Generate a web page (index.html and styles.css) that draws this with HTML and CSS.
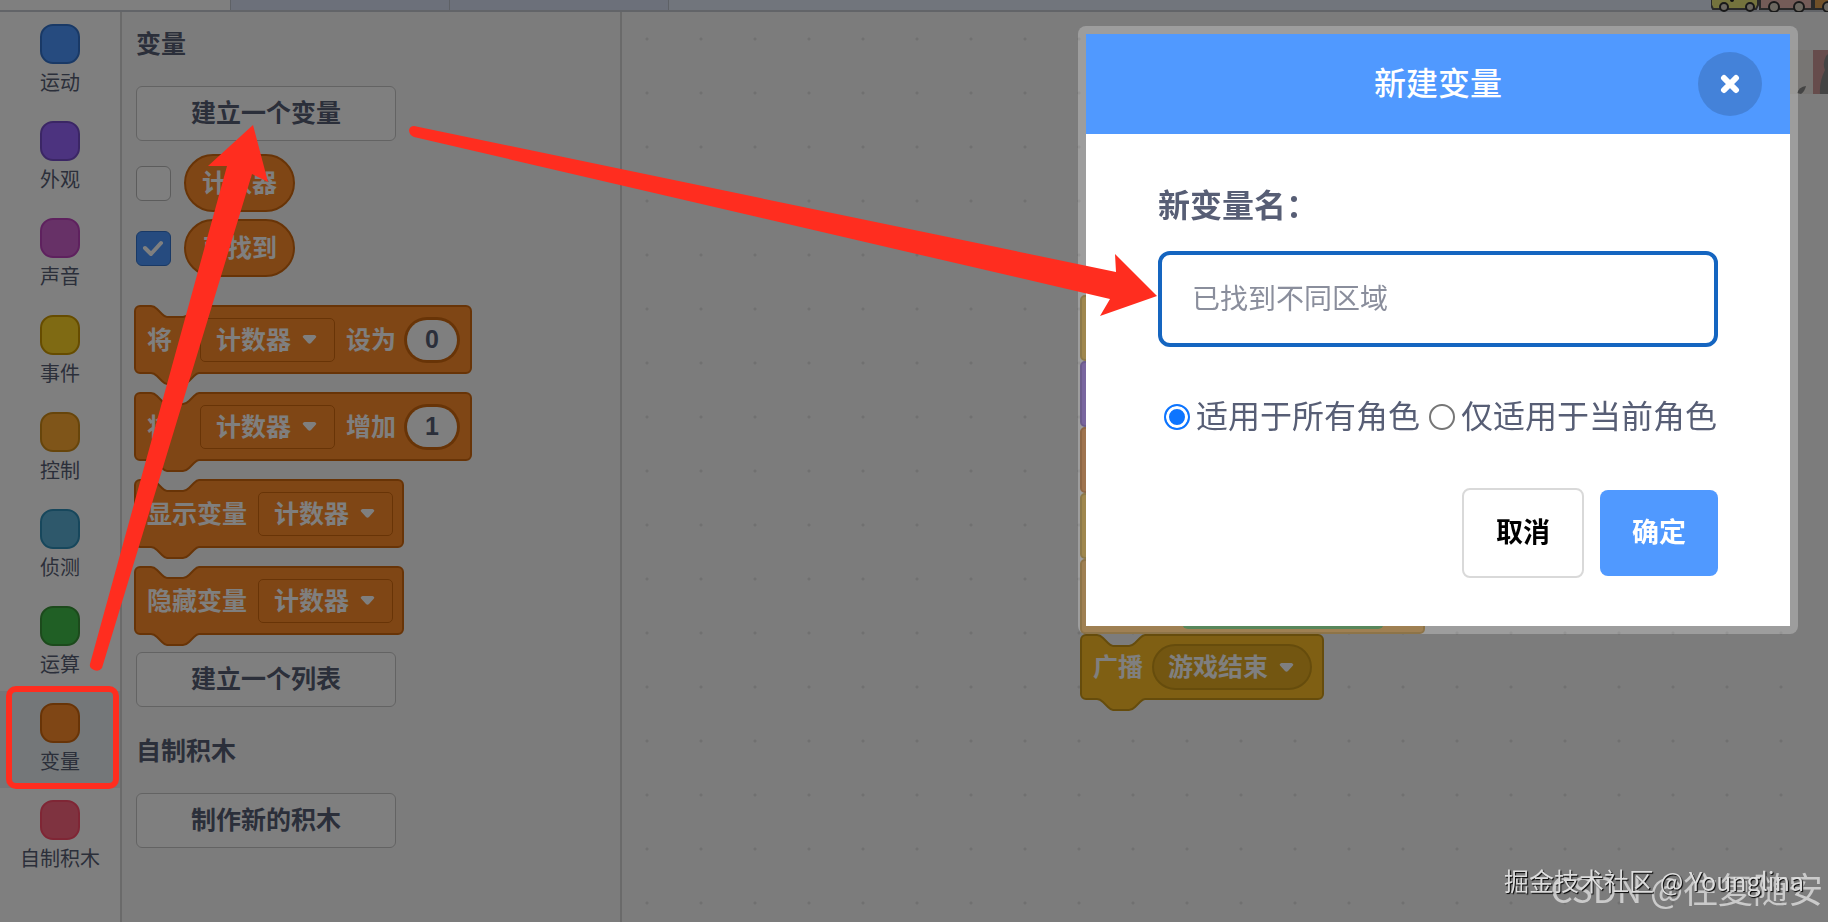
FILE: index.html
```html
<!DOCTYPE html>
<html lang="zh-CN">
<head>
    <meta charset="UTF-8">
    <meta name="viewport" content="width=device-width, initial-scale=1.0">
    <title>新建变量</title>
    <link rel="stylesheet" href="styles.css">
</head>
<body>
    <!-- shapes shared by the blocks -->
    <svg class="defs" aria-hidden="true">
        <symbol id="caret" viewBox="0 0 14 9"><path d="M2 0H12Q15 1 13 3L8.500 8Q7 9.500 5.500 8L1 3Q-1 1 2 0Z" fill="#fff"/></symbol>
        <path id="block-wide" d="M1 6a5 5 0 0 1 5-5H17c3 0 4 1 6 3l5 5c1 1 3 3 5 3h16c3 0 4-1 6-3l5-5c1-1 3-3 5-3H332a5 5 0 0 1 5 5V63a5 5 0 0 1-5 5H65c-2 0-4 2-5 3l-5 5c-2 2-3 3-6 3H33c-2 0-4-2-5-3l-5-5c-2-2-3-3-6-3H6a5 5 0 0 1-5-5z"/>
        <path id="block-mid" d="M1 6a5 5 0 0 1 5-5H17c3 0 4 1 6 3l5 5c1 1 3 3 5 3h16c3 0 4-1 6-3l5-5c1-1 3-3 5-3H264a5 5 0 0 1 5 5V63a5 5 0 0 1-5 5H65c-2 0-4 2-5 3l-5 5c-2 2-3 3-6 3H33c-2 0-4-2-5-3l-5-5c-2-2-3-3-6-3H6a5 5 0 0 1-5-5z"/>
        <path id="block-short" d="M1 6a5 5 0 0 1 5-5H17c3 0 4 1 6 3l5 5c1 1 3 3 5 3h16c3 0 4-1 6-3l5-5c1-1 3-3 5-3H238a5 5 0 0 1 5 5V60a5 5 0 0 1-5 5H65c-2 0-4 2-5 3l-5 5c-2 2-3 3-6 3H33c-2 0-4-2-5-3l-5-5c-2-2-3-3-6-3H6a5 5 0 0 1-5-5z"/>
    </svg>

    <div class="tabs">
        <div class="tab tab-active"></div>
        <div class="tab"></div>
        <div class="tab"></div>
        <svg class="cars" width="117" height="13" viewBox="0 0 117 13">
            <g stroke="#555" stroke-width="2">
                <path d="M0-4V5l2 4H45l2-4V-4" fill="#e8e77a"/>
                <path d="M49-4V9h52V-4" fill="#e8b8b0"/>
                <path d="M103-4V9h16V-4" fill="#e0a050"/>
            </g>
            <circle cx="21" cy="0" r="2" fill="#222"/>
            <g fill="#d8d0c0" stroke="#333" stroke-width="2">
                <circle cx="13" cy="7" r="4"/><circle cx="39" cy="7" r="4"/>
                <circle cx="63" cy="7" r="5"/><circle cx="88" cy="7" r="5"/>
                <circle cx="117" cy="7" r="5"/>
            </g>
        </svg>
    </div>

    <div class="editor">
        <nav class="toolbox">
            <button class="category motion"><span class="bubble"></span>运动</button>
            <button class="category looks"><span class="bubble"></span>外观</button>
            <button class="category sound"><span class="bubble"></span>声音</button>
            <button class="category events"><span class="bubble"></span>事件</button>
            <button class="category control"><span class="bubble"></span>控制</button>
            <button class="category sensing"><span class="bubble"></span>侦测</button>
            <button class="category operators"><span class="bubble"></span>运算</button>
            <button class="category data selected"><span class="bubble"></span>变量</button>
            <button class="category custom"><span class="bubble"></span>自制积木</button>
        </nav>

        <section class="flyout">
            <h2>变量</h2>
            <button class="flyout-button">建立一个变量</button>
            <div class="reporters">
                <label class="reporter-row">
                    <input type="checkbox">
                    <span class="reporter">计数器</span>
                </label>
                <label class="reporter-row">
                    <input type="checkbox" checked>
                    <svg class="tick" width="22" height="18" viewBox="0 0 22 18"><path d="M3 9l6 6L19 4" fill="none" stroke="#fff" stroke-width="4" stroke-linecap="round" stroke-linejoin="round"/></svg>
                    <span class="reporter">已找到</span>
                </label>
            </div>
            <div class="block-list">
                <div class="block wide">
                    <svg class="shape" width="338" height="80"><use href="#block-wide"/></svg>
                    <span class="first-word">将</span>
                    <span class="field"><select aria-label="变量"><option>计数器</option></select><svg class="caret"><use href="#caret"/></svg></span>
                    <span>设为</span>
                    <input class="number" type="text" value="0" aria-label="设为">
                </div>
                <div class="block wide">
                    <svg class="shape" width="338" height="80"><use href="#block-wide"/></svg>
                    <span class="first-word">将</span>
                    <span class="field"><select aria-label="变量"><option>计数器</option></select><svg class="caret"><use href="#caret"/></svg></span>
                    <span>增加</span>
                    <input class="number" type="text" value="1" aria-label="增加">
                </div>
                <div class="block mid">
                    <svg class="shape" width="270" height="80"><use href="#block-mid"/></svg>
                    <span>显示变量</span>
                    <span class="field"><select aria-label="显示变量"><option>计数器</option></select><svg class="caret"><use href="#caret"/></svg></span>
                </div>
                <div class="block mid">
                    <svg class="shape" width="270" height="80"><use href="#block-mid"/></svg>
                    <span>隐藏变量</span>
                    <span class="field"><select aria-label="隐藏变量"><option>计数器</option></select><svg class="caret"><use href="#caret"/></svg></span>
                </div>
            </div>
            <button class="flyout-button">建立一个列表</button>
            <h2 class="second">自制积木</h2>
            <button class="flyout-button">制作新的积木</button>
        </section>

        <main class="workspace">
            <div class="script">
                <div class="strip events"></div>
                <div class="strip looks"></div>
                <div class="strip data"></div>
                <div class="strip events"></div>
                <div class="strip control"><span class="slot"></span></div>
                <div class="block broadcast">
                    <svg class="shape" width="244" height="77"><use href="#block-short"/></svg>
                    <span>广播</span>
                    <span class="field round"><select aria-label="广播"><option>游戏结束</option></select><svg class="caret"><use href="#caret"/></svg></span>
                </div>
            </div>
            <svg class="sprite" width="42" height="44" viewBox="0 0 42 44">
                <path d="M0 0H42V44H0Z" fill="#efebe6"/>
                <path d="M25 0H42V44H25Z" fill="#c99"/>
                <path d="M38 6q-4 8-1 14-6 12-5 24h10V2z" fill="#888"/>
                <path d="M9 43q2-6 9-7-1 5-5 8z" fill="#888"/>
            </svg>
        </main>
    </div>

    <div class="overlay">
        <form class="modal" role="dialog" aria-labelledby="modalTitle">
            <div class="modal-header">
                <h1 id="modalTitle">新建变量</h1>
                <button type="button" class="close" aria-label="关闭">
                    <svg width="20" height="20" viewBox="0 0 20 20"><path d="M4 4L16 16M16 4L4 16" stroke="#fff" stroke-width="6" stroke-linecap="round"/></svg>
                </button>
            </div>
            <div class="modal-body">
                <label class="name-label" for="variableName">新变量名：</label>
                <input class="name-input" type="text" id="variableName" placeholder="已找到不同区域">
                <div class="options">
                    <label><input type="radio" name="scope" checked>适用于所有角色</label>
                    <label><input type="radio" name="scope">仅适用于当前角色</label>
                </div>
                <div class="buttons">
                    <button type="button" class="cancel">取消</button>
                    <button type="submit" class="ok">确定</button>
                </div>
            </div>
        </form>
    </div>

    <!-- hand-drawn marks over the editor -->
    <svg class="marks" width="1170" height="800" viewBox="0 0 1170 800" aria-hidden="true">
        <rect x="9" y="689" width="107" height="97" rx="7" fill="none" stroke="#ff2d1f" stroke-width="6"/>
        <g fill="#ff2d1f">
            <path d="M90 664L227 166L208 166L253 125L268 182L252 174L102 668Q99 672 94 670Q89 668 90 664Z"/>
            <path d="M414 126L1116 272L1115 254L1157 296L1100 316L1110 299L414 137Q409 135 409 130Q410 126 414 126Z"/>
        </g>
    </svg>
    <div class="watermark csdn">CSDN @往复随安</div>
    <div class="watermark juejin">掘金技术社区 @ Younglina</div>
</body>
</html>
```
FILE: styles.css
```css
* {
    box-sizing: border-box;
}
body {
    margin: 0;
    min-height: 100vh;
    display: flex;
    flex-direction: column;
    overflow: hidden;
    font-family: "Liberation Sans", "Noto Sans CJK SC", sans-serif;
    color: #575e75;
    background: #fff;
}
button, input, select {
    font-family: inherit;
    color: inherit;
    margin: 0;
}
h1, h2 {
    margin: 0;
}
.defs {
    position: absolute;
    width: 0;
    height: 0;
}

/* colours of the block families */
.motion { --fill: #4c97ff; --edge: #3373cc; }
.looks { --fill: #9966ff; --edge: #774dcb; }
.sound { --fill: #cf63cf; --edge: #bd42bd; }
.events, .broadcast { --fill: #ffbf26; --edge: #cc9919; }
.control { --fill: #ffab33; --edge: #cf8b17; }
.sensing { --fill: #5cb1d6; --edge: #2e8eb8; }
.operators { --fill: #40bf4a; --edge: #389438; }
.data, .flyout { --fill: #ff8c2a; --edge: #d1690e; }
.custom { --fill: #ff6680; --edge: #ff4d6a; }

/* top tabs */
.tabs {
    position: relative;
    display: flex;
    height: 12px;
    background: #e3eaf8;
    border-bottom: 2px solid #c4c8d0;
}
.tab {
    width: 219px;
    background: #d9e1f5;
    border-right: 1px solid #bcc2cc;
}
.tab-active {
    width: 231px;
    background: #fff;
}
.cars {
    position: absolute;
    right: 0;
    top: 0;
}

.editor {
    flex: 1;
    display: flex;
}

/* category list */
.toolbox {
    width: 122px;
    border-right: 2px solid #d5d5d5;
    background: #fff;
}
.category {
    display: flex;
    flex-direction: column;
    align-items: center;
    width: 100%;
    height: 97px;
    padding: 12px 0 0;
    border: none;
    background: none;
    font-size: 20px;
    line-height: 38px;
    white-space: nowrap;
}
.category.selected {
    background: #e9eef2;
}
.category.events .bubble {
    background: #ffd526;
    border-color: #cc9900;
}
.bubble {
    width: 40px;
    height: 40px;
    border: 2px solid var(--edge);
    border-radius: 13px;
    background: var(--fill);
}

/* block palette */
.flyout {
    width: 500px;
    padding-left: 14px;
    border-right: 2px solid #d5d5d5;
    background: #f9f9f9;
}
.flyout h2 {
    font-size: 25px;
    line-height: 64px;
    margin-bottom: 10px;
}
.flyout h2.second {
    margin-top: 12px;
}
.flyout-button {
    display: block;
    width: 260px;
    height: 55px;
    padding: 0;
    border: 1px solid #c6c6c6;
    border-radius: 6px;
    background: #fff;
    font-size: 25px;
    font-weight: bold;
    line-height: 53px;
}
.reporters {
    display: flex;
    flex-direction: column;
    gap: 7px;
    margin: 13px 0 28px;
}
.reporter-row {
    position: relative;
    display: flex;
    align-items: center;
    gap: 13px;
}
.reporter-row input {
    appearance: none;
    width: 35px;
    height: 35px;
    border: 1px solid #b9b9b9;
    border-radius: 6px;
    background: #fff;
}
.reporter-row input:checked {
    background: #4c97ff;
    border-color: #3373cc;
}
.tick {
    position: absolute;
    left: 6px;
}
.reporter {
    height: 58px;
    padding: 0 16px;
    border: 2px solid var(--edge);
    border-radius: 29px;
    background: var(--fill);
    color: #fff;
    font-size: 25px;
    font-weight: bold;
    line-height: 54px;
}
.block-list {
    display: flex;
    flex-direction: column;
    gap: 18px;
    margin: 0 0 17px -2px;
}
.block {
    position: relative;
    display: flex;
    align-items: center;
    gap: 11px;
    height: 69px;
    padding-left: 13px;
    color: #fff;
    font-size: 25px;
    font-weight: bold;
    line-height: 40px;
    white-space: nowrap;
}
.block.wide {
    width: 338px;
}
.block.mid {
    width: 270px;
}
.block > span, .block > input {
    position: relative;
}
.shape {
    position: absolute;
    left: 0;
    top: 0;
    fill: var(--fill);
    stroke: var(--edge);
    stroke-width: 2px;
}
.first-word {
    width: 42px;
}
.field {
    display: flex;
    align-items: center;
}
.field select {
    appearance: none;
    height: 44px;
    padding: 0 42px 0 15px;
    border: 1px solid var(--edge);
    border-radius: 5px;
    background: transparent;
    font-size: 25px;
    font-weight: bold;
}
.caret {
    position: absolute;
    right: 18px;
    width: 15px;
    height: 9px;
    pointer-events: none;
}
.number {
    width: 50px;
    height: 40px;
    padding: 0;
    border: none;
    border-radius: 20px;
    background: #fff;
    box-shadow: 0 0 0 3px var(--edge);
    color: #575e75;
    font-size: 25px;
    font-weight: bold;
    text-align: center;
}

/* canvas */
.workspace {
    position: relative;
    flex: 1;
    overflow: hidden;
    background: #f9f9f9 radial-gradient(circle, #e0e0e0 1px, transparent 2px) -2px 0 / 54px 54px;
}
.script {
    position: absolute;
    left: 458px;
    top: 283px;
}
.strip {
    width: 300px;
    height: 66px;
    border: 2px solid var(--edge);
    border-radius: 5px;
    background: var(--fill);
}
.strip.control {
    display: flex;
    align-items: flex-end;
    width: 345px;
    height: 75px;
    padding: 0 0 3px 100px;
}
.slot {
    width: 202px;
    height: 46px;
    border-radius: 6px;
    background: #40bf4a;
}
.broadcast {
    gap: 9px;
    width: 244px;
    height: 66px;
}
.broadcast .field select {
    height: 46px;
    padding: 0 41px 0 14px;
    border: 2px solid var(--edge);
    border-radius: 23px;
    background: #e6ac22;
}
.sprite {
    position: absolute;
    right: -2px;
    top: 38px;
}

/* dialog */
.overlay {
    position: fixed;
    inset: 0;
    display: flex;
    justify-content: flex-end;
    align-items: flex-start;
    padding: 26px 30px;
    background: rgba(0, 0, 0, 0.5);
}
.modal {
    width: 100%;
    max-width: 720px;
    border: 8px solid rgba(255, 255, 255, 0.25);
    border-radius: 8px;
    background: #fff;
    background-clip: padding-box;
}
.modal-header {
    display: grid;
    grid-template-columns: 1fr auto 1fr;
    align-items: center;
    height: 100px;
    background: #5099ff;
    color: #fff;
}
.modal-header h1 {
    grid-column: 2;
    font-size: 32px;
    font-weight: 500;
    line-height: 48px;
}
.close {
    display: grid;
    place-items: center;
    justify-self: end;
    width: 64px;
    height: 64px;
    margin-right: 28px;
    padding: 0;
    border: none;
    border-radius: 50%;
    background: rgba(0, 0, 0, 0.15);
}
.modal-body {
    display: flex;
    flex-direction: column;
    padding: 48px 72px;
    font-size: 32px;
    line-height: 48px;
}
.name-label {
    font-weight: bold;
}
.name-input {
    height: 96px;
    margin: 21px 0 45px;
    padding: 2px 30px 0;
    border: 4px solid #1565c0;
    border-radius: 12px;
    background: #fff;
    font-size: 28px;
}
.name-input::placeholder {
    color: #8a8e9c;
}
.options {
    display: flex;
    gap: 9px;
    padding-left: 6px;
    line-height: 50px;
    white-space: nowrap;
}
.options label {
    display: flex;
    align-items: center;
    gap: 6px;
}
.options input {
    appearance: none;
    width: 26px;
    height: 26px;
    border: 2px solid #767676;
    border-radius: 50%;
    background: #fff;
}
.options input:checked {
    border-color: #0d75ff;
    background: #0d75ff;
    box-shadow: inset 0 0 0 3px #fff;
}
.buttons {
    display: flex;
    justify-content: flex-end;
    align-items: center;
    gap: 16px;
    margin-top: 46px;
}
.buttons button {
    height: 86px;
    padding: 0 32px;
    border: none;
    border-radius: 8px;
    font-size: 27px;
    font-weight: bold;
    line-height: 40px;
}
.buttons .cancel {
    height: 90px;
    border: 2px solid #d9d9d9;
    background: #fff;
    color: #000;
}
.buttons .ok {
    background: #5099ff;
    color: #fff;
}

/* marks and watermarks */
.marks {
    position: absolute;
    left: 0;
    top: 0;
    pointer-events: none;
}
.watermark {
    position: fixed;
    font-family: "Noto Sans CJK SC", sans-serif;
    white-space: nowrap;
}
.csdn {
    right: 5px;
    bottom: 10px;
    color: rgba(255, 255, 255, 0.6);
    font-size: 35px;
    line-height: 48px;
}
.juejin {
    right: 24px;
    bottom: 24px;
    color: #ddd;
    font-size: 25px;
    line-height: 36px;
    text-shadow: 1px 1px 1px #000;
}
```
